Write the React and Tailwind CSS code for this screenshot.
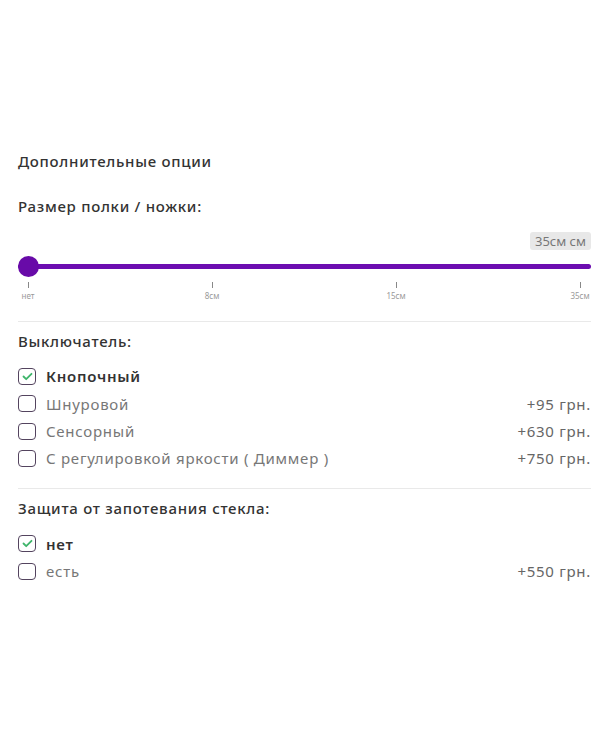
import { useState } from "react";

const switchOptions = [
  { id: "button", label: "Кнопочный", price: "" },
  { id: "cord", label: "Шнуровой", price: "+95 грн." },
  { id: "touch", label: "Сенсорный", price: "+630 грн." },
  { id: "dimmer", label: "С регулировкой яркости ( Диммер )", price: "+750 грн." }
];

const fogOptions = [
  { id: "no", label: "нет", price: "" },
  { id: "yes", label: "есть", price: "+550 грн." }
];

const ticks = ["нет", "8см", "15см", "35см"];

function Checkbox({ checked }) {
  return (
    <span className="w-[18px] h-[17px] shrink-0 rounded-[4px] border-[1.5px] border-[#54445f] flex items-center justify-center">
      {checked && (
        <svg width="11" height="9" viewBox="0 0 11 9" fill="none">
          <path
            d="M1.5 4.5 L4.2 7.2 L9.5 1.8"
            stroke="#3fb56b"
            strokeWidth="1.8"
            strokeLinecap="round"
            strokeLinejoin="round"
          />
        </svg>
      )}
    </span>
  );
}

function OptionGroup({ title, options, selected, onSelect }) {
  return (
    <div>
      <h3 className="h-[20px] leading-[20px] text-[15px] font-medium text-[#333]">{title}</h3>
      <div className="mt-[12px] flex flex-col">
        {options.map((opt) => {
          const active = selected === opt.id;
          return (
            <div
              key={opt.id}
              onClick={() => onSelect(opt.id)}
              className="h-[27.3px] flex items-center gap-[10px] cursor-pointer"
            >
              <Checkbox checked={active} />
              <span
                className={
                  active
                    ? "text-[15px] font-semibold text-[#333]"
                    : "text-[15px] text-[#777] tracking-[0.05em]"
                }
              >
                {opt.label}
              </span>
              <span className="ml-auto text-[15px] text-[#666]">{opt.price}</span>
            </div>
          );
        })}
      </div>
    </div>
  );
}

export default function App() {
  const [switchType, setSwitchType] = useState("button");
  const [fog, setFog] = useState("no");

  return (
    <div
      className="w-[600px] h-[750px] bg-white pl-[18px] pr-[9px] pt-[151px] tracking-[0.045em]"
      style={{ fontFamily: '"Noto Sans", "Open Sans", sans-serif' }}
    >
      <h2 className="h-[20px] leading-[20px] text-[15px] font-medium text-[#333]">
        Дополнительные опции
      </h2>

      <h3 className="mt-[25px] h-[20px] leading-[20px] text-[15px] font-medium text-[#333]">
        Размер полки / ножки:
      </h3>

      {/* size slider */}
      <div className="mt-[16px] flex justify-end">
        <span className="h-[18px] leading-[18px] px-[5px] rounded-[3px] bg-[#e8e8e8] text-[13px] text-[#777] tracking-normal">
          35см см
        </span>
      </div>
      <div className="relative mt-[14px] h-[5px] rounded-full bg-[#6c0db0]">
        <span className="absolute left-0 top-[-8px] w-[21px] h-[21px] rounded-full bg-[#680aa8]" />
      </div>
      <div className="mt-[13px] ml-[10px] mr-[11px] flex justify-between">
        {ticks.map((t) => (
          <div key={t} className="w-0 flex flex-col items-center">
            <span className="w-px h-[6px] bg-[#888]" />
            <span className="mt-[3px] text-[8px] leading-[10px] text-[#999] whitespace-nowrap tracking-normal">{t}</span>
          </div>
        ))}
      </div>

      <div className="mt-[20px] h-px bg-[#e9e9e9]" />

      <div className="mt-[9px]">
        <OptionGroup
          title="Выключатель:"
          options={switchOptions}
          selected={switchType}
          onSelect={setSwitchType}
        />
      </div>

      <div className="mt-[16px] h-px bg-[#e9e9e9]" />

      <div className="mt-[9px]">
        <OptionGroup
          title="Защита от запотевания стекла:"
          options={fogOptions}
          selected={fog}
          onSelect={setFog}
        />
      </div>
    </div>
  );
}
